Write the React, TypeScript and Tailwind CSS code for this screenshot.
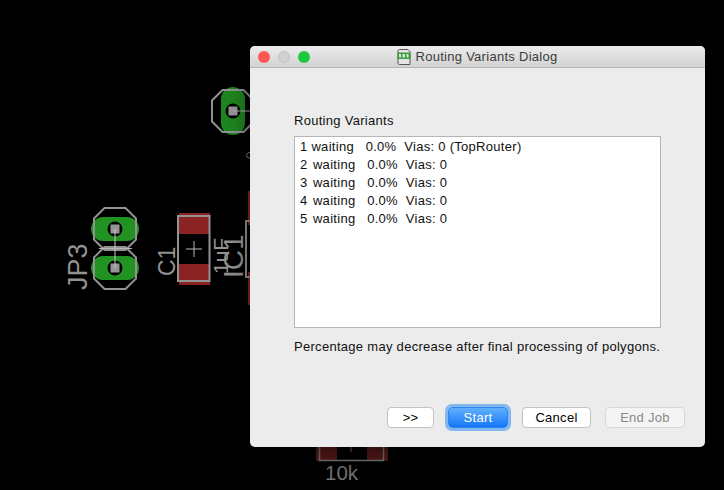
const rows = [
  { id: "1", rest: " waiting   0.0%  Vias: 0 (TopRouter)" },
  { id: "2", rest: " waiting   0.0%  Vias: 0" },
  { id: "3", rest: " waiting   0.0%  Vias: 0" },
  { id: "4", rest: " waiting   0.0%  Vias: 0" },
  { id: "5", rest: " waiting   0.0%  Vias: 0" },
];

const font = "font-['Liberation_Sans',Arial,sans-serif]";
const btn = "flex h-[21px] items-center justify-center rounded-[4px] border text-[13px] tracking-[0.28px]";
const grey = "#929292";
const pcbFont = "'Liberation Sans', Arial, sans-serif";

function octagon(cx: number, cy: number, r: number) {
  const a = r * 0.5;
  return [
    [cx - a, cy - r],
    [cx + a, cy - r],
    [cx + r, cy - a],
    [cx + r, cy + a],
    [cx + a, cy + r],
    [cx - a, cy + r],
    [cx - r, cy + a],
    [cx - r, cy - a],
  ]
    .map((p) => p.join(","))
    .join(" ");
}

function Pad({ cx, cy, vertical }: { cx: number; cy: number; vertical?: boolean }) {
  return (
    <g>
      {vertical ? (
        <rect x={cx - 12} y={cy - 24} width={24} height={48} rx={12} fill="#1f861f" />
      ) : (
        <rect x={cx - 24} y={cy - 12} width={48} height={24} rx={12} fill="#229322" />
      )}
      <circle cx={cx} cy={cy} r={7.5} fill="#000" />
      <rect x={cx - 4.5} y={cy - 4.5} width={9} height={9} fill="#969696" />
      <polygon points={octagon(cx, cy, 21)} fill="none" stroke={grey} strokeWidth={2} />
    </g>
  );
}

function Board() {
  return (
    <svg className="absolute inset-0" width={724} height={490} viewBox="0 0 724 490">
      <Pad cx={233} cy={111} vertical />
      <line x1={233} y1={111} x2={252} y2={111} stroke="#b0b0b0" />

      <Pad cx={115} cy={229} />
      <Pad cx={115} cy={268} />
      <line x1={115} y1={229} x2={115} y2={268} stroke="#c8c8c8" />
      <line x1={99} y1={248.5} x2={132} y2={248.5} stroke="#b8b8b8" />

      <text
        transform="translate(87 290) rotate(-90)"
        fontFamily={pcbFont}
        fontSize={27}
        fill={grey}
      >
        JP3
      </text>

      <rect x={179} y={213} width={31} height={21} fill="#8c2323" />
      <rect x={179} y={264} width={31} height={21} fill="#8c2323" />
      <rect x={178} y={216} width={31.5} height={65} fill="none" stroke={grey} strokeWidth={2} />
      <line x1={186} y1={249} x2={202} y2={249} stroke="#b8b8b8" />
      <line x1={194} y1={241} x2={194} y2={257} stroke="#b8b8b8" />

      <text
        transform="translate(175 276) rotate(-90)"
        fontFamily={pcbFont}
        fontSize={23}
        fill={grey}
      >
        C1
      </text>
      <text
        transform="translate(228 274) rotate(-90)"
        fontFamily={pcbFont}
        fontSize={21}
        fill={grey}
      >
        1uF
      </text>
      <text
        transform="translate(243 278) rotate(-90)"
        fontFamily={pcbFont}
        fontSize={28}
        fill={grey}
      >
        IC1
      </text>

      <rect x={248} y={191} width={4} height={34} fill="#8c2323" />
      <rect x={248} y={272} width={4} height={33} fill="#8c2323" />
      <path d="M252 221H246V277H252" fill="none" stroke={grey} strokeWidth={2} />
      <path d="M252 152C247 152 246 155 247 157C248 158 250 158 252 158" fill="none" stroke={grey} />

      <rect x={316} y={440} width={21} height={21} fill="#5a1a1a" />
      <rect x={367} y={440} width={21} height={21} fill="#5a1a1a" />
      <path d="M319.500 440V460.500H383.500V440" fill="none" stroke="#7a7a7a" strokeWidth={1.500} />
      <line x1={351} y1={440} x2={351} y2={452} stroke="#7a7a7a" />
      <text x={325} y={480} fontFamily={pcbFont} fontSize={20.500} fill="#747474">
        10k
      </text>
    </svg>
  );
}

function BrdIcon() {
  return (
    <svg width={14} height={16} viewBox="0 0 14 16" className="mr-[4px]">
      <path d="M2.500 .5H11L13 2.500V15.500H2.500C1.500 15.500 1 15 1 14V2C1 1 1.500 .5 2.500 .5Z" fill="#e4e4e4" stroke="#555" />
      <rect x={0.500} y={3.500} width={13} height={6.500} fill="#3d9a45" />
      <path d="M2 5h2v3.500H2zM5.500 5h2.500v3.500H5.500zM9.500 5h2v3.500h-2z" fill="#cfe8cf" />
    </svg>
  );
}

export default function App() {
  return (
    <div className={`relative h-[490px] w-[724px] overflow-hidden bg-black ${font}`}>
      <Board />

      <div className="absolute left-[250px] top-[46px] flex h-[401px] w-[455px] flex-col overflow-hidden rounded-[5px] bg-[#ececec] shadow-[0_8px_24px_rgba(0,0,0,0.55)]">
        <div className="relative flex h-[22px] shrink-0 items-center justify-center border-b border-[#b4b4b4] bg-gradient-to-b from-[#ebebeb] to-[#d3d3d3]">
          <div className="absolute left-[8px] top-[5px] flex gap-[8px]">
            <span className="size-[12px] rounded-full bg-[#fc5753]" />
            <span className="size-[12px] rounded-full border border-[#c4c4c4] bg-[#d0d0d0]" />
            <span className="size-[12px] rounded-full bg-[#1bc840]" />
          </div>
          <BrdIcon />
          <span className="text-[13px] leading-none tracking-[0.28px] text-[#3c3c3c]">Routing Variants Dialog</span>
        </div>

        <div className="flex flex-1 flex-col px-[44px] pt-[45px] tracking-[0.29px]">
          <div className="h-[23px] text-[13px] leading-[16px] text-[#111]">Routing Variants</div>
          <div className="h-[192px] w-[367px] border border-[#b5b5b5] bg-white pl-[5px] pt-[1px]">
            {rows.map((r) => (
              <div key={r.id} className="h-[18px] whitespace-pre text-[13px] leading-[18px] text-[#111]">
                <span className={r.id === "1" ? "" : "mr-[1.500px]"}>{r.id}</span>
                {r.rest}
              </div>
            ))}
          </div>
          <div className="mt-[11px] whitespace-pre text-[13px] leading-[16px] text-[#111]">
            Percentage may decrease after final processing of polygons.
          </div>
          <div className="mr-[-24px] mt-[52px] flex justify-end gap-[14px]">
            <button className={`${btn} w-[47px] border-[#c2c2c2] bg-white text-black`}>&gt;&gt;</button>
            <button className={`${btn} w-[60px] border-[#2f86f0] bg-gradient-to-b from-[#5fb0fc] to-[#0f76f6] text-white shadow-[0_0_0_3px_rgba(96,165,240,0.75)]`}>
              Start
            </button>
            <button className={`${btn} w-[69px] border-[#c2c2c2] bg-white text-black`}>Cancel</button>
            <button className={`${btn} w-[80px] border-[#d8d8d8] bg-[#f4f4f4] text-[#8a8a8a]`}>End Job</button>
          </div>
        </div>
      </div>
    </div>
  );
}
